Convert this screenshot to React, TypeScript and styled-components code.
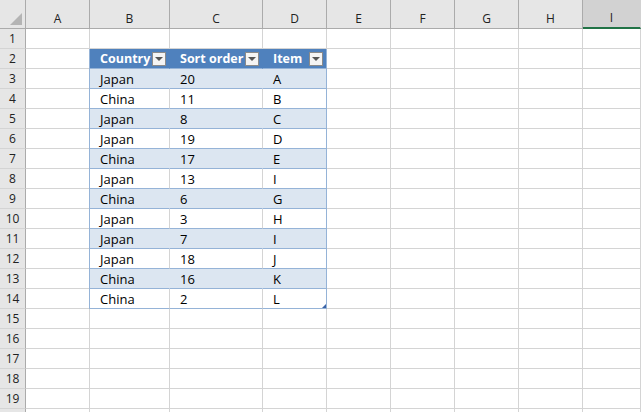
import React from "react";
import styled, { createGlobalStyle } from "styled-components";

const Global = createGlobalStyle`
  html, body { margin: 0; padding: 0; background: #fff; overflow: hidden; }
  body { font-family: "Open Sans", "Liberation Sans", sans-serif; }
`;

const Sheet = styled.div`
  display: grid;
  grid-template-columns: 26px 64px 80px 93px 64px 64px 64px 64px 64px 58px;
  grid-template-rows: 29px repeat(20, 20px);
  width: 641px;
  height: 412px;
  overflow: hidden;
`;

const ColHead = styled.div<{ $sel?: boolean }>`
  background: ${(p) => (p.$sel ? "#d2d2d2" : "#e6e6e6")};
  border-right: 1px solid ${(p) => (p.$sel ? "#d2d2d2" : "#ababab")};
  border-bottom: ${(p) => (p.$sel ? "2px solid #217346" : "1px solid #ababab")};
  display: flex;
  align-items: center;
  justify-content: center;
  padding-top: 8px;
  box-sizing: border-box;
  font-size: 12px;
  color: #222;
`;

const Corner = styled.div`
  background: #e6e6e6;
  border-right: 1px solid #ababab;
  border-bottom: 1px solid #ababab;
  position: relative;
  box-sizing: border-box;
`;

const Tri = styled.div`
  position: absolute;
  right: 3px;
  bottom: 3px;
  width: 0;
  height: 0;
  border-left: 12px solid transparent;
  border-bottom: 12px solid #b4b4b4;
`;

const RowHead = styled.div`
  background: #e6e6e6;
  border-right: 1px solid #ababab;
  border-bottom: 1px solid #d4d4d4;
  display: flex;
  align-items: center;
  justify-content: center;
  font-size: 12px;
  color: #222;
  box-sizing: border-box;
`;

const Cell = styled.div`
  border-right: 1px solid #d4d4d4;
  border-bottom: 1px solid #d4d4d4;
  box-sizing: border-box;
`;

const TCell = styled.div<{ $kind: "head" | "band" | "plain"; $last?: boolean; $first?: boolean }>`
  position: relative;
  box-sizing: border-box;
  display: flex;
  align-items: center;
  padding-left: 10px;
  font-size: ${(p) => (p.$kind === "head" ? "12.5px" : "13px")};
  font-weight: ${(p) => (p.$kind === "head" ? 700 : 400)};
  color: ${(p) => (p.$kind === "head" ? "#fff" : "#000")};
  background: ${(p) => (p.$kind === "head" ? "#4f81bd" : p.$kind === "band" ? "#dce6f1" : "#fff")};
  border-bottom: 1px solid #95b3d7;
  border-right: 1px solid
    ${(p) =>
      p.$last ? "#95b3d7" : p.$kind === "head" ? "#4f81bd" : p.$kind === "band" ? "#dce6f1" : "#d4d4d4"};
  margin-left: ${(p) => (p.$first ? "-1px" : "0")};
  border-left: ${(p) => (p.$first ? "1px solid #95b3d7" : "none")};
`;

const Filter = styled.div`
  position: absolute;
  right: 3px;
  top: 3px;
  width: 14px;
  height: 14px;
  box-sizing: border-box;
  background: #f4f4f4;
  border: 1px solid #8a8a8a;
  display: flex;
  align-items: center;
  justify-content: center;
  &::after {
    content: "";
    border-left: 4px solid transparent;
    border-right: 4px solid transparent;
    border-top: 4px solid #555;
  }
`;

const Handle = styled.div`
  position: absolute;
  right: 0px;
  bottom: 0px;
  width: 0;
  height: 0;
  border-left: 4px solid transparent;
  border-bottom: 4px solid #3a63a7;
`;

const cols = ["A", "B", "C", "D", "E", "F", "G", "H", "I"];
const data: [string, string, string][] = [
  ["Japan", "20", "A"],
  ["China", "11", "B"],
  ["Japan", "8", "C"],
  ["Japan", "19", "D"],
  ["China", "17", "E"],
  ["Japan", "13", "I"],
  ["China", "6", "G"],
  ["Japan", "3", "H"],
  ["Japan", "7", "I"],
  ["Japan", "18", "J"],
  ["China", "16", "K"],
  ["China", "2", "L"],
];
const headers = ["Country", "Sort order", "Item"];

export default function App() {
  const cells: React.ReactNode[] = [];
  cells.push(
    <Corner key="corner">
      <Tri />
    </Corner>
  );
  cols.forEach((c) => cells.push(<ColHead key={c} $sel={c === "I"}>{c}</ColHead>));
  for (let r = 1; r <= 20; r++) {
    cells.push(<RowHead key={"r" + r}>{r < 20 ? r : ""}</RowHead>);
    for (let ci = 0; ci < 9; ci++) {
      const key = `c${r}-${ci}`;
      const inTable = r >= 2 && r <= 14 && ci >= 1 && ci <= 3;
      if (!inTable) {
        cells.push(<Cell key={key} />);
        continue;
      }
      const ti = ci - 1;
      if (r === 2) {
        cells.push(
          <TCell key={key} $kind="head" $last={ti === 2} $first={ti === 0}>
            {headers[ti]}
            <Filter />
          </TCell>
        );
      } else {
        const di = r - 3;
        cells.push(
          <TCell key={key} $kind={di % 2 === 0 ? "band" : "plain"} $last={ti === 2} $first={ti === 0}>
            {data[di][ti]}
            {r === 14 && ti === 2 && <Handle />}
          </TCell>
        );
      }
    }
  }
  return (
    <>
      <Global />
      <Sheet>{cells}</Sheet>
    </>
  );
}
